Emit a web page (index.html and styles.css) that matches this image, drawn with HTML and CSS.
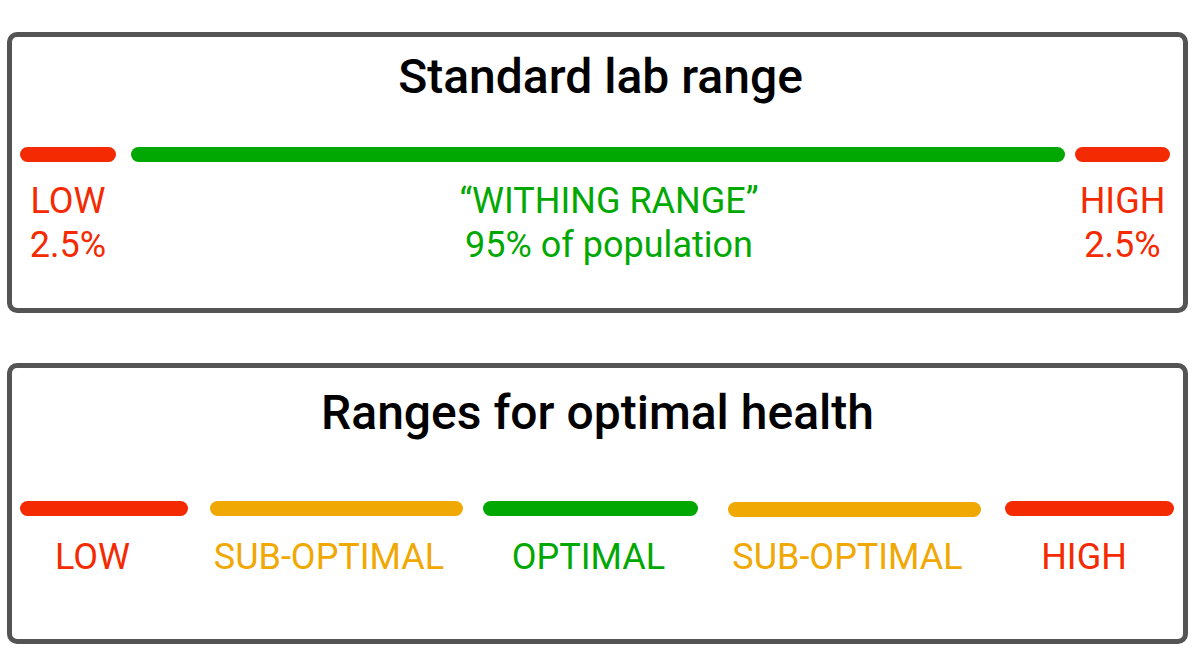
FILE: index.html
```html
<!DOCTYPE html>
<html lang="en">
<head>
<meta charset="utf-8">
<title>Lab ranges</title>
<link rel="stylesheet" href="styles.css">
</head>
<body>
<main class="page">
  <section class="card card-lab">
    <h2 class="card-title">Standard lab range</h2>
    <div class="scale scale-lab">
      <div class="seg seg-lab-low red">
        <div class="bar"></div>
        <div class="label">LOW<br>2.5%</div>
      </div>
      <div class="seg seg-lab-mid green">
        <div class="bar"></div>
        <div class="label">“WITHING RANGE”<br>95% of population</div>
      </div>
      <div class="seg seg-lab-high red">
        <div class="bar"></div>
        <div class="label">HIGH<br>2.5%</div>
      </div>
    </div>
  </section>

  <section class="card card-opt">
    <h2 class="card-title">Ranges for optimal health</h2>
    <div class="scale scale-opt">
      <div class="seg seg-o1 red">
        <div class="bar"></div>
        <div class="label">LOW</div>
      </div>
      <div class="seg seg-o2 orange">
        <div class="bar"></div>
        <div class="label">SUB-OPTIMAL</div>
      </div>
      <div class="seg seg-o3 green">
        <div class="bar"></div>
        <div class="label">OPTIMAL</div>
      </div>
      <div class="seg seg-o4 orange">
        <div class="bar"></div>
        <div class="label">SUB-OPTIMAL</div>
      </div>
      <div class="seg seg-o5 red">
        <div class="bar"></div>
        <div class="label">HIGH</div>
      </div>
    </div>
  </section>
</main>
</body>
</html>
```

FILE: styles.css
```css
* { box-sizing: border-box; }

html, body {
  margin: 0;
  padding: 0;
  background: #ffffff;
}

body {
  font-family: Roboto, "Liberation Sans", Arial, sans-serif;
  width: 1195px;
  height: 672px;
  overflow: hidden;
}

.page {
  display: flex;
  flex-direction: column;
  gap: 50px;
  padding: 32px 7px 0 7px;
}

.card {
  width: 1181px;
  height: 281px;
  border: 5px solid #545454;
  border-radius: 10px;
  background: #fff;
}

.card-title {
  margin: 0;
  font-size: 48px;
  line-height: 56px;
  font-weight: 500;
  color: #000;
  text-align: center;
}

.card-lab .card-title {
  padding-top: 12px;
  padding-left: 6px;
}

.card-opt .card-title {
  padding-top: 17px;
}

.scale {
  display: flex;
  align-items: flex-start;
}

.scale-lab {
  margin-top: 42px;
  padding: 0 13px 0 8px;
}

.scale-opt {
  margin-top: 60px;
  padding: 0 9px 0 8px;
}

.seg {
  display: flex;
  flex-direction: column;
}

.bar {
  height: 15px;
  border-radius: 8px;
}

.label {
  font-size: 36px;
  line-height: 44px;
  font-weight: 400;
  text-align: center;
  white-space: nowrap;
}

.scale-lab .label { margin-top: 17px; }
.scale-opt .label { margin-top: 19px; }

.red .bar { background: #f42a02; }
.red .label { color: #f42a02; }
.green .bar { background: #02a802; }
.green .label { color: #02a802; }
.orange .bar { background: #f0a804; }
.orange .label { color: #f0a804; }

/* standard lab range */
.seg-lab-low { width: 96px; margin-right: 15px; }
.seg-lab-mid { flex: 1; margin-right: 10px; }
.seg-lab-mid .label { padding-left: 22px; }
.seg-lab-high { width: 95px; }

/* optimal ranges */
.seg-o1 { width: 168px; margin-right: 22px; }
.seg-o1 .label { padding-right: 23px; }
.seg-o2 { width: 253px; margin-right: 20px; }
.seg-o2 .label { padding-right: 15px; }
.seg-o3 { width: 215px; margin-right: 30px; }
.seg-o3 .label { padding-right: 4px; }
.seg-o4 { width: 253px; margin-right: 24px; }
.seg-o4 .bar { margin-top: 1px; }
.seg-o4 .label { padding-right: 14px; margin-top: 18px; }
.seg-o5 { width: 169px; }
.seg-o5 .label { padding-right: 11px; }
```
